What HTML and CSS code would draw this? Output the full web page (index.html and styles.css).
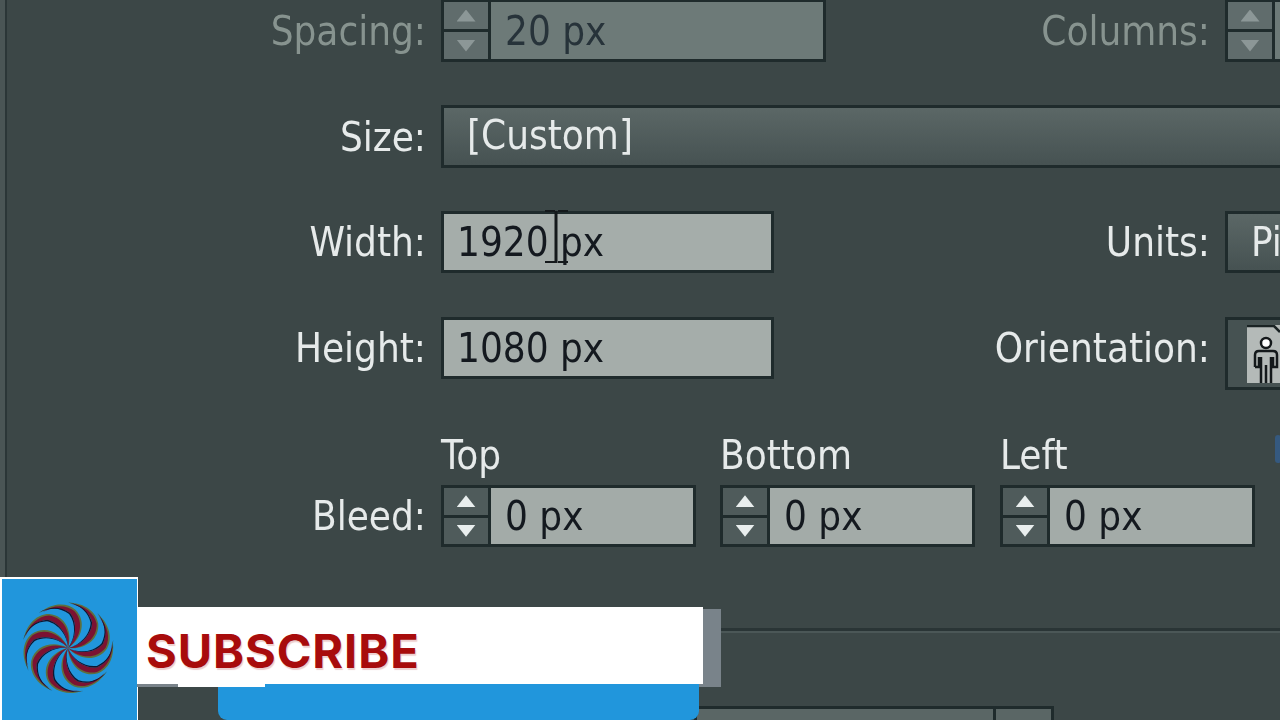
FILE: index.html
```html
<!DOCTYPE html>
<html lang="en">
<head>
<meta charset="utf-8">
<title>New Document</title>
<link rel="stylesheet" href="styles.css">
</head>
<body>
<main class="dialog">
  <div class="row row-spacing is-disabled">
    <span class="label">Spacing:</span>
    <div class="spin-field w-spacing">
      <div class="spinner"><span class="btn"><i class="up"></i></span><span class="btn"><i class="down"></i></span></div>
      <span class="value">20 px</span>
    </div>
    <div class="side">
      <span class="label-side">Columns:</span>
      <div class="spin-field w-side">
        <div class="spinner"><span class="btn"><i class="up"></i></span><span class="btn"><i class="down"></i></span></div>
        <span class="value"></span>
      </div>
    </div>
  </div>

  <div class="row row-size">
    <span class="label">Size:</span>
    <div class="select select-size">[Custom]</div>
  </div>

  <div class="row row-width">
    <span class="label">Width:</span>
    <div class="field"><span>1920 px</span><svg class="ibeam" width="24" height="54" viewBox="0 0 24 54"><path d="M0 1h10M13 1h10M0 52h10M13 52h10" fill="none" stroke="#14191b" stroke-width="2"/><path d="M11 1v52" fill="none" stroke="#14191b" stroke-width="3"/></svg></div>
    <div class="side">
      <span class="label-side">Units:</span>
      <div class="select select-units">Pixels</div>
    </div>
  </div>

  <div class="row row-height">
    <span class="label">Height:</span>
    <div class="field"><span>1080 px</span></div>
    <div class="side side-top">
      <span class="label-side">Orientation:</span>
      <div class="orient">
        <span class="orient-tile">
          <svg width="34" height="58" viewBox="0 0 34 58"><path d="M0 1h27l6 6" fill="none" stroke="#1a2324" stroke-width="2.5"/><circle cx="19" cy="18" r="5" fill="#fff" stroke="#14191b" stroke-width="2.5"/><path d="M8 42V30q0-4 4-4h14q4 0 4 4v12h-4V32M12 32v10H8M14 32v26M19 40v18M24 32v26" fill="none" stroke="#14191b" stroke-width="2.5"/></svg>
        </span>
      </div>
    </div>
  </div>

  <div class="row row-bleed">
    <span class="label">Bleed:</span>
    <div class="bleed-col bleed-col-first">
      <span class="bleed-label">Top</span>
      <div class="spin-field w-bleed">
        <div class="spinner"><span class="btn"><i class="up"></i></span><span class="btn"><i class="down"></i></span></div>
        <span class="value">0 px</span>
      </div>
    </div>
    <div class="bleed-col">
      <span class="bleed-label">Bottom</span>
      <div class="spin-field w-bleed">
        <div class="spinner"><span class="btn"><i class="up"></i></span><span class="btn"><i class="down"></i></span></div>
        <span class="value">0 px</span>
      </div>
    </div>
    <div class="bleed-col bleed-col-last">
      <span class="bleed-label">Left</span>
      <div class="spin-field w-bleed">
        <div class="spinner"><span class="btn"><i class="up"></i></span><span class="btn"><i class="down"></i></span></div>
        <span class="value">0 px</span>
      </div>
    </div>
    <span class="link-sliver"></span>
  </div>

  <div class="rule"></div>
  <div class="lower-box"><span class="lower-part"></span></div>
</main>

<aside class="promo">
  <div class="promo-logo">
    <svg width="106" height="106" viewBox="-50 -50 100 100">
      <defs>
        <g id="blade">
          <path d="M0 0C13-8 18-25 7-36C-1-43-15-43-27-33C-15-40-5-39 2-33C10-24 9-9 0 0Z" fill="#5f6f3c"/>
          <path d="M0 0C11-8 16-24 6-35C-2-41-14-41-24-34C-14-39-5-38 2-33C9-24 8-9 0 0Z" fill="#7b1232"/>
          <path d="M0 0C7-9 8-23 1-32C-7-38-16-39-28-33C-16-40-7-39 2-33C9-24 8-9 0 0Z" fill="#10152f"/>
        </g>
      </defs>
      <use href="#blade"/>
      <use href="#blade" transform="rotate(40)"/>
      <use href="#blade" transform="rotate(80)"/>
      <use href="#blade" transform="rotate(120)"/>
      <use href="#blade" transform="rotate(160)"/>
      <use href="#blade" transform="rotate(200)"/>
      <use href="#blade" transform="rotate(240)"/>
      <use href="#blade" transform="rotate(280)"/>
      <use href="#blade" transform="rotate(320)"/>
    </svg>
  </div>
  <div class="promo-shadow"></div>
  <div class="promo-tab"></div>
  <div class="promo-banner">SUBSCRIBE</div>
  <div class="promo-notch"></div>
</aside>
</body>
</html>
```
FILE: styles.css
```css
* { box-sizing: border-box; }
html, body { margin: 0; padding: 0; }
body {
  width: 1280px;
  height: 720px;
  overflow: hidden;
  position: relative;
  background: #4a5555;
  font-family: "DejaVu Sans", "Noto Sans", sans-serif;
}
.dialog {
  margin-left: 5px;
  width: 1275px;
  height: 720px;
  overflow: hidden;
  background: #3c4747;
  border-left: 2px solid #2b3637;
  filter: blur(0.6px);
  color: #e3e8e8;
  font-size: 40px;
  font-stretch: condensed;
  line-height: 1;
}
.row { display: flex; align-items: center; height: 62px; width: 1273px; }
.label { width: 419px; flex: none; text-align: right; color: #e6eaea; margin-right: 15px; }
.row-spacing { margin-top: -1px; height: 63px; }
.row-size { margin-top: 43px; height: 63px; }
.row-width { margin-top: 43px; }
.row-height { margin-top: 44px; }
.row-bleed { height: 112px; align-items: flex-end; margin-top: 56px; }
.row-bleed .label { height: 62px; display: flex; align-items: center; justify-content: flex-end; }
.side { margin-left: auto; display: flex; align-items: center; }
.side-top { align-self: flex-start; align-items: flex-start; }
.label-side { color: #e6eaea; margin-right: 15px; }
.side-top .label-side { margin-top: 11px; }
.is-disabled .label, .is-disabled .label-side { color: #87938f; }
.spin-field {
  display: flex;
  height: 62px;
  border: 3px solid #1f2b2c;
  background: #a3aba8;
  flex: none;
}
.is-disabled .spin-field { background: #6d7a78; height: 63px; color: #27333a; }
.w-spacing { width: 385px; }
.w-side { width: 95px; margin-right: -40px; }
.w-bleed { width: 255px; }
.spinner { width: 47px; flex: none; display: flex; flex-direction: column; gap: 3px; background: #1f2b2c; border-right: 3px solid #1f2b2c; }
.btn { flex: 1; background: #4f5b5b; display: flex; align-items: center; justify-content: center; }
.is-disabled .btn { background: #606c6c; }
.btn i { display: block; width: 19px; height: 12px; background: #e9eeee; }
.is-disabled .btn i { background: #8c9797; }
.btn .up { clip-path: polygon(50% 0, 100% 100%, 0 100%); }
.btn .down { clip-path: polygon(0 0, 100% 0, 50% 100%); }
.value { padding-left: 14px; color: #14191f; align-self: center; }
.is-disabled .value { color: #27333a; }
.select {
  height: 63px;
  background: linear-gradient(#5b6766, #465252);
  border: 3px solid #1f2b2c;
  border-right: 0;
  display: flex;
  align-items: center;
  color: #e6eaea;
  flex: none;
}
.select-size { width: 900px; padding: 0 0 3px 23px; }
.select-units { width: 55px; height: 62px; padding-left: 23px; overflow: hidden; white-space: nowrap; }
.field {
  position: relative;
  width: 333px;
  height: 62px;
  border: 3px solid #1f2b2c;
  background: #a5adaa;
  color: #14191f;
  padding-left: 13px;
  display: flex;
  align-items: center;
  flex: none;
}
.ibeam { position: absolute; left: 101px; top: -4px; }
.orient {
  width: 55px;
  height: 73px;
  background: #465252;
  border: 3px solid #1f2b2c;
  border-right: 0;
  padding: 5px 0 0 19px;
}
.orient-tile { display: block; width: 50px; height: 58px; background: #b4bab8; }
.bleed-col { display: flex; flex-direction: column; align-items: flex-start; margin-right: 25px; }
.bleed-col-first { margin-right: 24px; }
.bleed-col-last { margin-right: 20px; }
.bleed-label { height: 50px; color: #e6eaea; }
.link-sliver { flex: none; align-self: flex-start; width: 6px; height: 28px; background: #35597f; border-radius: 3px; }
.rule { margin-top: 81px; height: 3px; background: #2a3536; box-shadow: 0 2px 0 #4b5757; }
.lower-box {
  margin: 75px 0 0 687px;
  width: 360px;
  height: 20px;
  background: #5a6665;
  border: 3px solid #1f2b2c;
  display: flex;
  justify-content: flex-end;
}
.lower-part { width: 58px; border-left: 3px solid #1f2b2c; }
.promo-logo {
  position: absolute;
  left: 0;
  top: 577px;
  width: 138px;
  height: 143px;
  background: #2196dc;
  border: solid #fff;
  border-width: 2px 1px 0 2px;
  display: flex;
  align-items: center;
  justify-content: center;
  padding: 0 3px 4px 0;
}
.promo-shadow { position: absolute; left: 137px; top: 609px; width: 584px; height: 78px; background: #79838a; }
.promo-tab { position: absolute; left: 218px; top: 684px; width: 481px; height: 36px; background: #2196dc; border-radius: 0 0 9px 9px; }
.promo-banner {
  position: absolute;
  left: 137px;
  top: 607px;
  width: 566px;
  height: 77px;
  background: #fff;
  padding: 9px 0 0 9px;
  display: flex;
  align-items: center;
  font-family: "Inter", "Lato", sans-serif;
  font-weight: 700;
  font-size: 47px;
  letter-spacing: 0.9px;
  color: #a80c0c;
  text-shadow: 1px 2px 1px #eccfcf;
}
.promo-notch { position: absolute; left: 178px; top: 684px; width: 87px; height: 3px; background: #fff; }
```
